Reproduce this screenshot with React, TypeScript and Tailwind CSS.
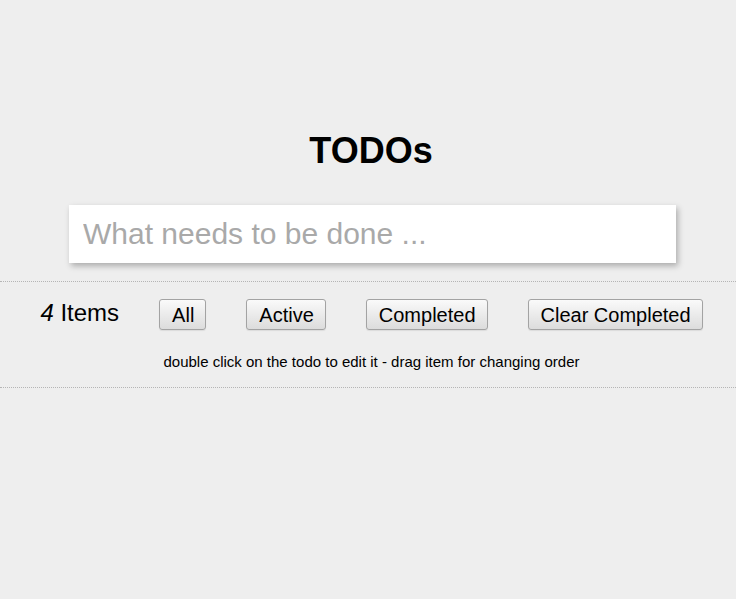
import React from "react";

const btn =
  "h-[31px] pl-[12px] pr-[11px] text-[20px] leading-[20px] text-black border border-[#a3a3a3] rounded-[3px] bg-gradient-to-b from-[#fafafa] to-[#dcdcdc] shadow-[0_1px_1px_rgba(0,0,0,0.08)]";

export default function App() {
  return (
    <div className="min-h-[599px] bg-[#eeeeee] font-['Liberation_Sans',Arial,sans-serif] text-black">
      <div className="pt-[133px]">
        <h1 className="text-center pl-[6px] text-[36px] leading-[36px] font-bold">TODOs</h1>
        <div className="mt-[36px] flex justify-center pl-[9px]">
          <input
            className="w-[607px] h-[58px] bg-white px-[14px] text-[30px] outline-none placeholder:text-[#a9a9a9] shadow-[2px_3px_6px_rgba(0,0,0,0.28)]"
            placeholder="What needs to be done ..."
          />
        </div>
        <div className="mt-[18px] border-t border-dotted border-[#b5b5b5] border-b">
          <div className="pt-[17px] flex justify-center items-center gap-[40px] pl-[7px]">
            <span className="text-[24px] leading-[24px] -mt-[4px]">
              <em>4</em> Items
            </span>
            <button className={btn}>All</button>
            <button className={btn}>Active</button>
            <button className={btn}>Completed</button>
            <button className={btn}>Clear Completed</button>
          </div>
          <p className="mt-[23px] pb-[17px] text-center pl-[7px] text-[15px] leading-[17px]">
            double click on the todo to edit it - drag item for changing order
          </p>
        </div>
      </div>
    </div>
  );
}
